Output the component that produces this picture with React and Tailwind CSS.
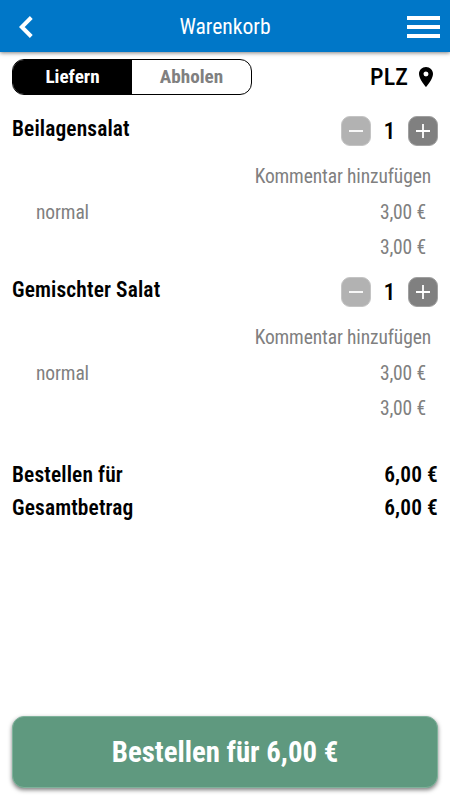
import React, { useState } from 'react';

const items = [
  { id: 1, name: 'Beilagensalat', variant: 'normal', price: 3 },
  { id: 2, name: 'Gemischter Salat', variant: 'normal', price: 3 },
];

const formatPrice = (value) => `${value.toFixed(2).replace('.', ',')} €`;

const Header = () => (
  <header className="flex h-[52px] items-center justify-between bg-[#0077c8] pl-[19px] pr-[10px] pt-0.5 text-white shadow-[0_1px_4px_rgba(0,0,0,0.5)]">
    <button type="button" aria-label="Zurück" className="w-6">
      <svg width="14" height="22" viewBox="0 0 14 22" fill="none" stroke="currentColor" strokeWidth="4">
        <path d="M12.3 1.5 2.8 11l9.5 9.5" />
      </svg>
    </button>
    <h1 className="text-[21.6px] leading-6">Warenkorb</h1>
    <button type="button" aria-label="Menü" className="flex w-[33px] flex-col gap-[5px]">
      <span className="h-1 bg-white" />
      <span className="h-1 bg-white" />
      <span className="h-1 bg-white" />
    </button>
  </header>
);

const DeliveryBar = () => (
  <div className="flex h-9 items-center justify-between">
    <div className="flex h-9 w-60 overflow-hidden rounded-xl border border-black text-[19.2px] font-bold">
      <button type="button" className="flex-1 bg-black text-white">Liefern</button>
      <button type="button" className="flex-1 text-[#808080]">Abholen</button>
    </div>
    <button type="button" className="flex items-center gap-1.5 text-2xl font-medium tracking-[0.1px]">
      PLZ
      <svg width="24" height="24" viewBox="0 0 24 24" fill="currentColor">
        <path d="M12 2C8.13 2 5 5.13 5 9c0 5.25 7 13 7 13s7-7.75 7-13c0-3.87-3.13-7-7-7zm0 9.5a2.5 2.5 0 0 1 0-5 2.5 2.5 0 0 1 0 5z" />
      </svg>
    </button>
  </div>
);

const Stepper = ({ count, onChange }) => (
  <div className="flex items-center">
    <button
      type="button"
      aria-label="Weniger"
      onClick={() => onChange(Math.max(1, count - 1))}
      className="flex h-[30px] w-[30px] items-center justify-center rounded-[9px] border border-[#c4c4c4] bg-[#b2b2b2] text-white"
    >
      <svg width="14" height="14" viewBox="0 0 14 14" stroke="currentColor" strokeWidth="1.8">
        <path d="M0 7h14" />
      </svg>
    </button>
    <span className="w-[37px] text-center text-2xl font-medium leading-[30px]">{count}</span>
    <button
      type="button"
      aria-label="Mehr"
      onClick={() => onChange(count + 1)}
      className="flex h-[30px] w-[30px] items-center justify-center rounded-[9px] border border-[#a0a0a0] bg-[#808080] text-white"
    >
      <svg width="14" height="14" viewBox="0 0 14 14" stroke="currentColor" strokeWidth="1.8">
        <path d="M0 7h14M7 0v14" />
      </svg>
    </button>
  </div>
);

const CartItem = ({ item }) => {
  const [count, setCount] = useState(1);

  return (
    <section className="h-[161px]">
      <div className="flex h-[30px] justify-between">
        <h2 className="text-[21.4px] font-semibold leading-[26px] tracking-[0.14px]">{item.name}</h2>
        <Stepper count={count} onChange={setCount} />
      </div>
      <div className="mt-[13px] text-[19.5px] leading-[35px] tracking-[-0.12px] text-[#808080]">
        <div className="pr-[7px] text-right">Kommentar hinzufügen</div>
        <div className="mt-px flex justify-between pl-6 pr-3">
          <span>{item.variant}</span>
          <span>{formatPrice(item.price)}</span>
        </div>
        <div className="pr-3 text-right">{formatPrice(item.price * count)}</div>
      </div>
    </section>
  );
};

const App = () => {
  const total = items.reduce((sum, item) => sum + item.price, 0);

  return (
    <div className="flex h-screen flex-col bg-white font-['Roboto_Condensed','Roboto',sans-serif] text-black font-stretch-condensed">
      <Header />
      <main className="flex flex-1 flex-col px-3 pb-3 pt-[7px]">
        <DeliveryBar />
        <div className="mt-[21px]">
          {items.map((item) => (
            <CartItem key={item.id} item={item} />
          ))}
        </div>
        <div className="mt-5 text-[21.4px] font-semibold leading-[33px] tracking-[0.14px]">
          <div className="flex justify-between">
            <span>Bestellen für</span>
            <span>{formatPrice(total)}</span>
          </div>
          <div className="flex justify-between">
            <span>Gesamtbetrag</span>
            <span>{formatPrice(total)}</span>
          </div>
        </div>
        <button
          type="button"
          className="mt-auto h-[72px] rounded-xl border border-[#7fb29b] bg-[#5f997f] pt-0.5 text-[28.8px] font-bold text-white shadow-[0_2px_4px_rgba(0,0,0,0.5)]"
        >
          Bestellen für {formatPrice(total)}
        </button>
      </main>
    </div>
  );
};

export default App;
